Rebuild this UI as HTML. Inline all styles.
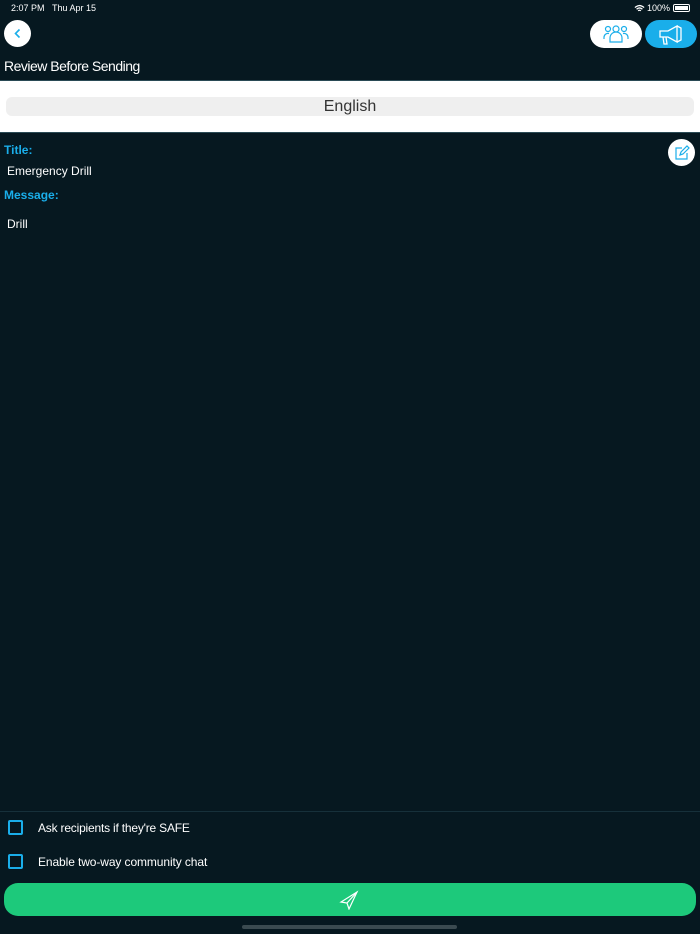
<!DOCTYPE html>
<html><head><meta charset="utf-8"><style>
*{margin:0;padding:0;box-sizing:border-box}
body{width:700px;height:934px;background:#061820;font-family:"Liberation Sans",sans-serif;color:#fff;position:relative;overflow:hidden}
.a{position:absolute}
</style></head><body>
<div class="a" style="left:11px;top:3px;font-size:9px">2:07 PM&nbsp;&nbsp;&nbsp;Thu Apr 15</div>
<div class="a" style="left:634px;top:3px;font-size:9px;display:flex;align-items:center;gap:2px">
<svg width="11" height="9" viewBox="0 0 12 9"><path d="M1 3.5Q6 -1 11 3.5M2.8 5.3Q6 2.5 9.2 5.3M4.5 7Q6 5.8 7.5 7" stroke="#fff" stroke-width="1.4" fill="none"/></svg>100%
<span style="display:inline-block;width:17px;height:8px;border:1px solid #fff;border-radius:2px;padding:1px;margin-left:1px"><span style="display:block;height:100%;background:#fff"></span></span></div>
<div class="a" style="left:4px;top:20px;width:27px;height:27px;border-radius:50%;background:#fff"></div>
<svg class="a" style="left:12px;top:27px" width="12" height="13" viewBox="0 0 12 13"><path d="M7.5 2.5L3.5 6.5L7.5 10.5" stroke="#1aaeea" stroke-width="1.6" fill="none"/></svg>
<div class="a" style="left:590px;top:20px;width:52px;height:28px;border-radius:14px;background:#fff"></div>
<svg class="a" style="left:603px;top:24px" width="26" height="20" viewBox="0 0 26 20" fill="none" stroke="#1aaeea" stroke-width="1.2"><circle cx="13" cy="5" r="3"/><circle cx="5" cy="5" r="2.5"/><circle cx="21" cy="5" r="2.5"/><path d="M7 18v-4a6 6 0 0112 0v4z"/><path d="M1 15v-2a4 4 0 015-3.5M25 15v-2a4 4 0 00-5-3.5"/></svg>
<div class="a" style="left:645px;top:20px;width:52px;height:28px;border-radius:14px;background:#1aaeea"></div>
<svg class="a" style="left:658px;top:24px" width="26" height="22" viewBox="0 0 26 22" fill="none" stroke="#fff" stroke-width="1.3"><path d="M2 7h8l9-5v16l-9-5H2z"/><path d="M5 13l1 7h3l-1-7"/><path d="M19 2l4 2v12l-4 2"/></svg>
<div class="a" style="left:4px;top:58px;font-size:14px;letter-spacing:-0.5px">Review Before Sending</div>
<div class="a" style="left:0;top:80px;width:700px;height:1px;background:#2a4a55"></div>
<div class="a" style="left:0;top:81px;width:700px;height:51px;background:#fff"></div>
<div class="a" style="left:6px;top:97px;width:688px;height:19px;border-radius:6px;background:#efefef;color:#333;font-size:16px;text-align:center;line-height:19px">English</div>
<div class="a" style="left:0;top:132px;width:700px;height:1px;background:#2a4a55"></div>
<div class="a" style="left:4px;top:143px;font-size:12px;color:#1aaeea;font-weight:bold">Title:</div>
<div class="a" style="left:7px;top:164px;font-size:12px">Emergency Drill</div>
<div class="a" style="left:4px;top:188px;font-size:12px;color:#1aaeea;font-weight:bold">Message:</div>
<div class="a" style="left:7px;top:217px;font-size:12px">Drill</div>
<div class="a" style="left:668px;top:139px;width:27px;height:27px;border-radius:50%;background:#fff"></div>
<svg class="a" style="left:674px;top:145px" width="16" height="16" viewBox="0 0 16 16" fill="none" stroke="#1aaeea" stroke-width="1.2"><path d="M8 3H2v11h11V8"/><path d="M6 10l1-3 6-6 2 2-6 6z"/></svg>
<div class="a" style="left:0;top:811px;width:700px;height:1px;background:#16303a"></div>
<div class="a" style="left:8px;top:820px;width:15px;height:15px;border:2px solid #1aaeea;border-radius:2px"></div>
<div class="a" style="left:38px;top:821px;font-size:12px;letter-spacing:-0.2px">Ask recipients if they're SAFE</div>
<div class="a" style="left:8px;top:854px;width:15px;height:15px;border:2px solid #1aaeea;border-radius:2px"></div>
<div class="a" style="left:38px;top:855px;font-size:12px;letter-spacing:-0.1px">Enable two-way community chat</div>
<div class="a" style="left:4px;top:883px;width:692px;height:33px;border-radius:14px;background:#1dc97b"></div>
<svg class="a" style="left:339px;top:890px" width="20" height="20" viewBox="0 0 20 20" fill="none" stroke="#fff" stroke-width="1.2"><path d="M18 2L2 12l6 1 2 6z"/><path d="M18 2L8 13"/></svg>
<div class="a" style="left:242px;top:925px;width:215px;height:4px;border-radius:2px;background:#3a4a50"></div>
</body></html>
